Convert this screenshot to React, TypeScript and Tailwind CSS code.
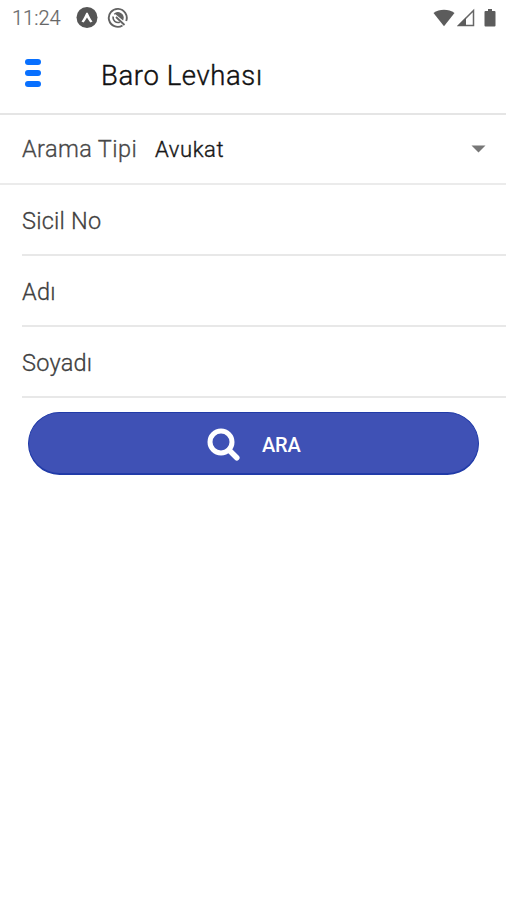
const FIELDS = ["Sicil No", "Adı", "Soyadı"];

function StatusBar() {
  return (
    <div className="flex h-9 items-center pl-3 pr-2 text-[#666]">
      <span className="w-[63px] text-[20px] font-light leading-9 [-webkit-text-stroke:0.2px]">11:24</span>
      <svg className="ml-px h-[22px] w-[22px]" viewBox="0 0 22 22">
        <circle cx="11" cy="10.5" r="10.5" fill="#555" />
        <path d="M5.5 14.5C7.5 12.5 9 8 10.2 6c.5-.7 1.1-.7 1.6 0C13 8 14.5 12.5 16.5 14.5l-2 1c-1.3-1.2-2.2-3-3.5-5-1.3 2-2.2 3.8-3.5 5z" fill="#fff" />
      </svg>
      <svg className="ml-[9px] h-[22px] w-[22px]" viewBox="0 0 22 22" fill="none" stroke="#626262">
        <path d="M15.5 18.5A9 9 0 1 1 19.2 14" strokeWidth="1.9" />
        <path d="M12.8 15.2A5 5 0 0 1 6.2 9.5" strokeWidth="1.6" />
        <path d="M7.2 7.2A5.2 5.2 0 0 1 15.800 12.500L8.500 6.500" fill="#626262" strokeWidth="1.2" />
        <path d="M9 10l8.500 8" strokeWidth="1.8" />
      </svg>
      <div className="ml-auto flex items-center">
        <svg className="h-5 w-[22px]" viewBox="0 0 22 20">
          <path d="M.5 5C6.5.6 15.5.6 21.5 5L11 18.2z" fill="#5c5c5c" />
        </svg>
        <svg className="ml-0.5 h-5 w-[18px]" viewBox="0 0 18 20">
          <path d="M1.500 17.500L16.500 2.500v15z" fill="none" stroke="#666" strokeWidth="1.500" />
          <path d="M.5 18L9 9.500V18z" fill="#5c5c5c" />
        </svg>
        <svg className="ml-[9px] mr-[2px] h-5 w-3" viewBox="0 0 12 20">
          <path d="M4 1h4v2h2.500q1 0 1 1v13.500q0 1-1 1h-9q-1 0-1-1V4q0-1 1-1H4z" fill="#5c5c5c" />
        </svg>
      </div>
    </div>
  );
}

function Header() {
  return (
    <header className="flex h-[79px] items-center border-b-2 border-[#e5e5e5] pl-[25px]">
      <button className="-mt-1 flex w-4 flex-col gap-[5px]" aria-label="Menu">
        <span className="h-1.5 rounded-full bg-[#0870ff]" />
        <span className="h-1.5 rounded-full bg-[#0870ff]" />
        <span className="h-1.5 rounded-full bg-[#0870ff]" />
      </button>
      <h1 className="ml-[60px] pt-[3px] text-[27.5px] font-light tracking-[0.6px] text-[#111] [-webkit-text-stroke:0.4px]">Baro Levhası</h1>
    </header>
  );
}

export default function App() {
  return (
    <div className="h-[900px] w-[506px] overflow-hidden bg-white font-['Roboto',sans-serif]">
      <StatusBar />
      <Header />

      <div className="flex h-[70px] items-center border-b-2 border-[#ebebeb] pl-[22px] pr-5 text-[#474747]">
        <span className="w-[133px] pt-0.5 text-[23.5px] font-light tracking-[0.4px] [-webkit-text-stroke:0.3px]">Arama Tipi</span>
        <span className="pt-px text-[22px] font-light tracking-[0.6px] text-[#181818] [-webkit-text-stroke:0.4px]">Avukat</span>
        <svg className="ml-auto h-2 w-[15px]" viewBox="0 0 15 8">
          <path d="M.5.5h14L7.500 7.500z" fill="#777" />
        </svg>
      </div>

      <div className="pl-[22px]">
        {FIELDS.map(label => (
          <div key={label} className="flex h-[71px] items-center border-b-2 border-[#e8e8e8] pt-[5px] text-[23.5px] font-light tracking-[0.25px] text-[#404040] [-webkit-text-stroke:0.3px]">
            {label}
          </div>
        ))}
      </div>

      <button className="ml-7 mt-[14px] flex h-[63px] w-[451px] items-center rounded-full border border-b-2 border-[#213ba8] bg-[#3f51b5] pl-[178px] text-white">
        <svg className="mt-[3px] h-[34px] w-[34px]" viewBox="0 0 34 34" fill="none" stroke="currentColor">
          <circle cx="14" cy="14" r="11" strokeWidth="5" />
          <path d="M22 22l7.800 7.800" strokeWidth="5.500" strokeLinecap="round" />
        </svg>
        <span className="ml-[21px] pt-[3px] text-[20px] font-medium tracking-[-0.2px]">ARA</span>
      </button>
    </div>
  );
}
